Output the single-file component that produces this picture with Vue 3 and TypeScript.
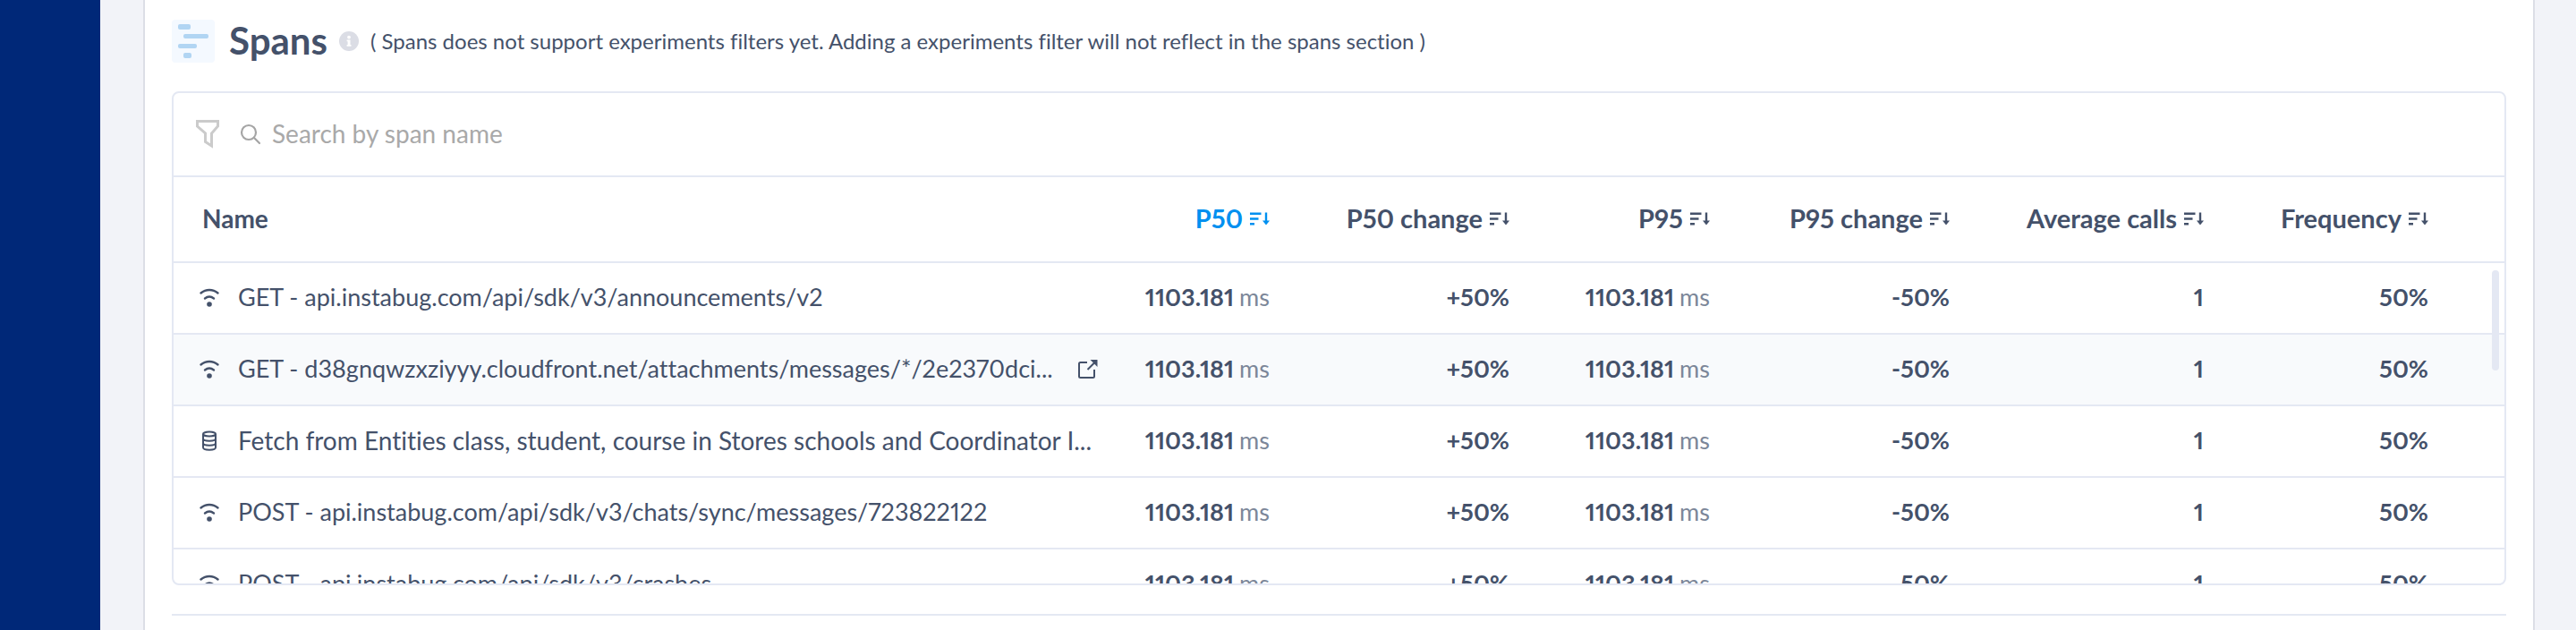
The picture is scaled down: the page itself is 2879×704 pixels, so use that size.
<script setup lang="ts">
import { ref } from 'vue'

type SpanKind = 'network' | 'database'
interface SpanRow { kind: SpanKind; name: string; linked?: boolean; hovered?: boolean; p50: string; p50Change: string; p95: string; p95Change: string; calls: string; frequency: string }

const metrics = { p50: '1103.181', p50Change: '+50%', p95: '1103.181', p95Change: '-50%', calls: '1', frequency: '50%' }
const rows: SpanRow[] = [
  { kind: 'network', name: 'GET - api.instabug.com/api/sdk/v3/announcements/v2', ...metrics },
  { kind: 'network', name: 'GET - d38gnqwzxziyyy.cloudfront.net/attachments/messages/*/2e2370dci...', linked: true, hovered: true, ...metrics },
  { kind: 'database', name: 'Fetch from Entities class, student, course in Stores schools and Coordinator I...', ...metrics },
  { kind: 'network', name: 'POST - api.instabug.com/api/sdk/v3/chats/sync/messages/723822122', ...metrics },
  { kind: 'network', name: 'POST - api.instabug.com/api/sdk/v3/crashes', ...metrics },
]
const columns = ['P50', 'P50 change', 'P95', 'P95 change', 'Average calls', 'Frequency']
const sorted = ref('P50')
const query = ref('')
</script>

<template>
  <div class="app">
    <nav class="rail" aria-label="Main"></nav>
    <main class="page">
      <section class="panel">
        <header class="heading">
          <svg class="logo" viewBox="0 0 48 48" aria-hidden="true">
            <rect width="48" height="48" rx="4" fill="#f4f9ff" />
            <g fill="#b1d5f3">
              <rect x="7" y="5" width="14" height="6" rx="2" />
              <rect x="13" y="16" width="28" height="5" rx="2" />
              <rect x="7" y="27" width="21" height="5" rx="2" />
              <rect x="13" y="37" width="9" height="6" rx="2" />
            </g>
          </svg>
          <h2>Spans</h2>
          <svg class="info" viewBox="0 0 22 22" aria-hidden="true">
            <circle cx="11" cy="11" r="11" fill="#dbdde5" />
            <circle cx="11" cy="6.6" r="1.9" fill="#fff" />
            <path d="M8.6 9.4h3.9v5.6h1v1.8H8.6V15h1v-3.8h-1z" fill="#fff" />
          </svg>
          <p>( Spans does not support experiments filters yet. Adding a experiments filter will not reflect in the spans section )</p>
        </header>

        <div class="card">
          <div class="search">
            <button type="button" class="filter" aria-label="Filter">
              <svg viewBox="0 0 28 34" fill="none" stroke="#cbcbcb" stroke-width="3"><path d="M2.5 2.5h23v5.5l-7 8v14l-7-4.500V16l-9-8z" /></svg>
            </button>
            <svg class="lens" viewBox="0 0 24 24" fill="none" stroke="#a5a5a5" stroke-width="2.2" stroke-linecap="round" aria-hidden="true"><circle cx="10" cy="10" r="8" /><path d="m16 16 6 6" /></svg>
            <input v-model="query" type="search" aria-label="Search by span name" placeholder="Search by span name" />
          </div>

          <div class="scroller">
            <table>
              <colgroup><col class="c-name" /><col class="c-p50" /><col class="c-change" /><col class="c-p95" /><col class="c-change" /><col class="c-calls" /><col class="c-freq" /></colgroup>
              <thead>
                <tr>
                  <th scope="col">Name</th>
                  <th v-for="column in columns" :key="column" scope="col">
                    <button type="button" class="sort" :class="{ active: sorted === column }" @click="sorted = column">
                      {{ column }}
                      <svg viewBox="0 0 22 16" fill="none" stroke="currentColor" stroke-width="2.4" aria-hidden="true">
                        <path d="M0 2.800h12.500M0 8.500h9.500M0 14.200h5M18 1.500v11" />
                        <path d="M14 10.500h8L18 15.500z" fill="currentColor" stroke="none" />
                      </svg>
                    </button>
                  </th>
                </tr>
              </thead>
              <tbody>
                <tr v-for="row in rows" :key="row.name" :class="{ hovered: row.hovered }">
                  <td>
                    <div class="name" :class="row.kind">
                      <svg v-if="row.kind === 'network'" class="kind" viewBox="0 0 24 24" fill="none" stroke="currentColor" stroke-width="2.400" stroke-linecap="round" aria-hidden="true">
                        <path d="M2.500 7.500c5.500-4.700 13.500-4.700 19 0M7 13.500c3-2.300 7-2.300 10 0" />
                        <circle cx="12" cy="20" r="2.800" fill="currentColor" stroke="none" />
                      </svg>
                      <svg v-else class="kind" viewBox="0 0 24 24" fill="none" stroke="currentColor" stroke-width="2" aria-hidden="true">
                        <ellipse cx="12" cy="5" rx="7" ry="2.500" />
                        <path d="M5 5v15c0 3.500 14 3.500 14 0V5M5 10c0 3.500 14 3.500 14 0M5 15c0 3.500 14 3.500 14 0" />
                      </svg>
                      <span>{{ row.name }}</span>
                      <a v-if="row.linked" href="#" aria-label="Open span">
                        <svg viewBox="0 0 24 24" fill="none" stroke="currentColor" stroke-width="2" aria-hidden="true">
                          <path d="M12 5H4.500Q3 5 3 6.500v14Q3 22 4.500 22h14q1.500 0 1.500-1.500V13M12.500 13l8-8" />
                          <path d="M15.500 2H23.500v8z" fill="currentColor" stroke="none" />
                        </svg>
                      </a>
                    </div>
                  </td>
                  <td>{{ row.p50 }}<span class="unit">ms</span></td>
                  <td>{{ row.p50Change }}</td>
                  <td>{{ row.p95 }}<span class="unit">ms</span></td>
                  <td>{{ row.p95Change }}</td>
                  <td>{{ row.calls }}</td>
                  <td>{{ row.frequency }}</td>
                </tr>
              </tbody>
            </table>
            <div class="thumb" aria-hidden="true"></div>
          </div>
        </div>
        <hr />
      </section>
    </main>
  </div>
</template>

<style>
body { margin: 0; }
</style>

<style scoped>
.app { display: flex; height: 100vh; overflow: hidden; background: #f2f3f8; color: #44516a; font-family: Lato, "Open Sans", sans-serif; font-size: 28px; line-height: 36px; font-variant-ligatures: no-common-ligatures; font-variant-numeric: proportional-nums; }
.rail { flex: none; width: 112px; background: #002878; }
.page { flex: 1; min-width: 0; padding: 0 46px 0 48px; display: flex; }
.panel { flex: 1; min-width: 0; box-sizing: border-box; padding: 22px 30px 0; background: #fff; border: solid #dcdee6; border-width: 0 2px; }
.heading { display: flex; align-items: center; height: 48px; margin-bottom: 32px; }
.logo { width: 48px; height: 48px; margin-right: 16px; }
h2 { margin: 0 13px 0 0; padding-bottom: 2px; font-size: 42px; line-height: 48px; font-weight: 700; }
.info { width: 22px; height: 22px; margin-right: 13px; }
p { margin: 0; font-size: 24px; }
.card { box-sizing: border-box; height: 552px; border: 2px solid #e4e8f3; border-radius: 8px; overflow: hidden; display: flex; flex-direction: column; }
.search { flex: none; display: flex; align-items: center; height: 92px; padding: 0 24px; border-bottom: 2px solid #e4e8f3; }
button { padding: 0; border: 0; background: none; color: inherit; font: inherit; cursor: pointer; }
.filter { display: flex; margin-right: 22px; }
.filter svg { width: 28px; height: 34px; }
.lens { width: 24px; height: 24px; margin-right: 12px; }
input { flex: 1; padding: 0 0 2px; border: 0; outline: 0; background: none; font: inherit; color: inherit; }
input::placeholder { color: #a9a9a9; opacity: 1; }
.scroller { position: relative; flex: 1; min-height: 0; overflow: hidden; }
table { width: 100%; table-layout: fixed; border-collapse: separate; border-spacing: 0; }
.c-p50 { width: 204px; }
.c-change { width: 268px; }
.c-p95 { width: 224px; }
.c-calls { width: 284px; }
.c-freq { width: 336px; }
th, td { box-sizing: border-box; padding: 0 0 2px; border-bottom: 2px solid #e4e8f3; text-align: right; font-weight: 700; white-space: nowrap; }
th { height: 96px; font-size: 29px; }
td { height: 80px; font-size: 27px; }
th:first-child { padding-left: 32px; text-align: left; font-size: 28px; }
td:first-child { text-align: left; font-weight: 400; }
th:last-child, td:last-child { padding-right: 85px; }
.sort { display: inline-flex; align-items: center; gap: 8px; font-weight: 700; }
.sort svg { width: 22px; height: 16px; }
.active { color: #0090f0; }
.hovered td { background: #f8fafc; }
.name { display: flex; align-items: center; padding-left: 28px; }
.name.database { font-size: 28px; }
.name a { display: flex; margin-left: 26px; color: inherit; }
.name a svg { width: 24px; height: 24px; }
.kind { flex: none; width: 24px; height: 24px; margin-right: 20px; }
.unit { margin-left: 6px; font-weight: 400; color: #7c8799; }
.thumb { position: absolute; top: 104px; right: 6px; width: 8px; height: 112px; border-radius: 4px; background: #e4e8f3; }
hr { margin: 32px 0 0; border: 0; height: 2px; background: #e4e8f3; }
</style>
